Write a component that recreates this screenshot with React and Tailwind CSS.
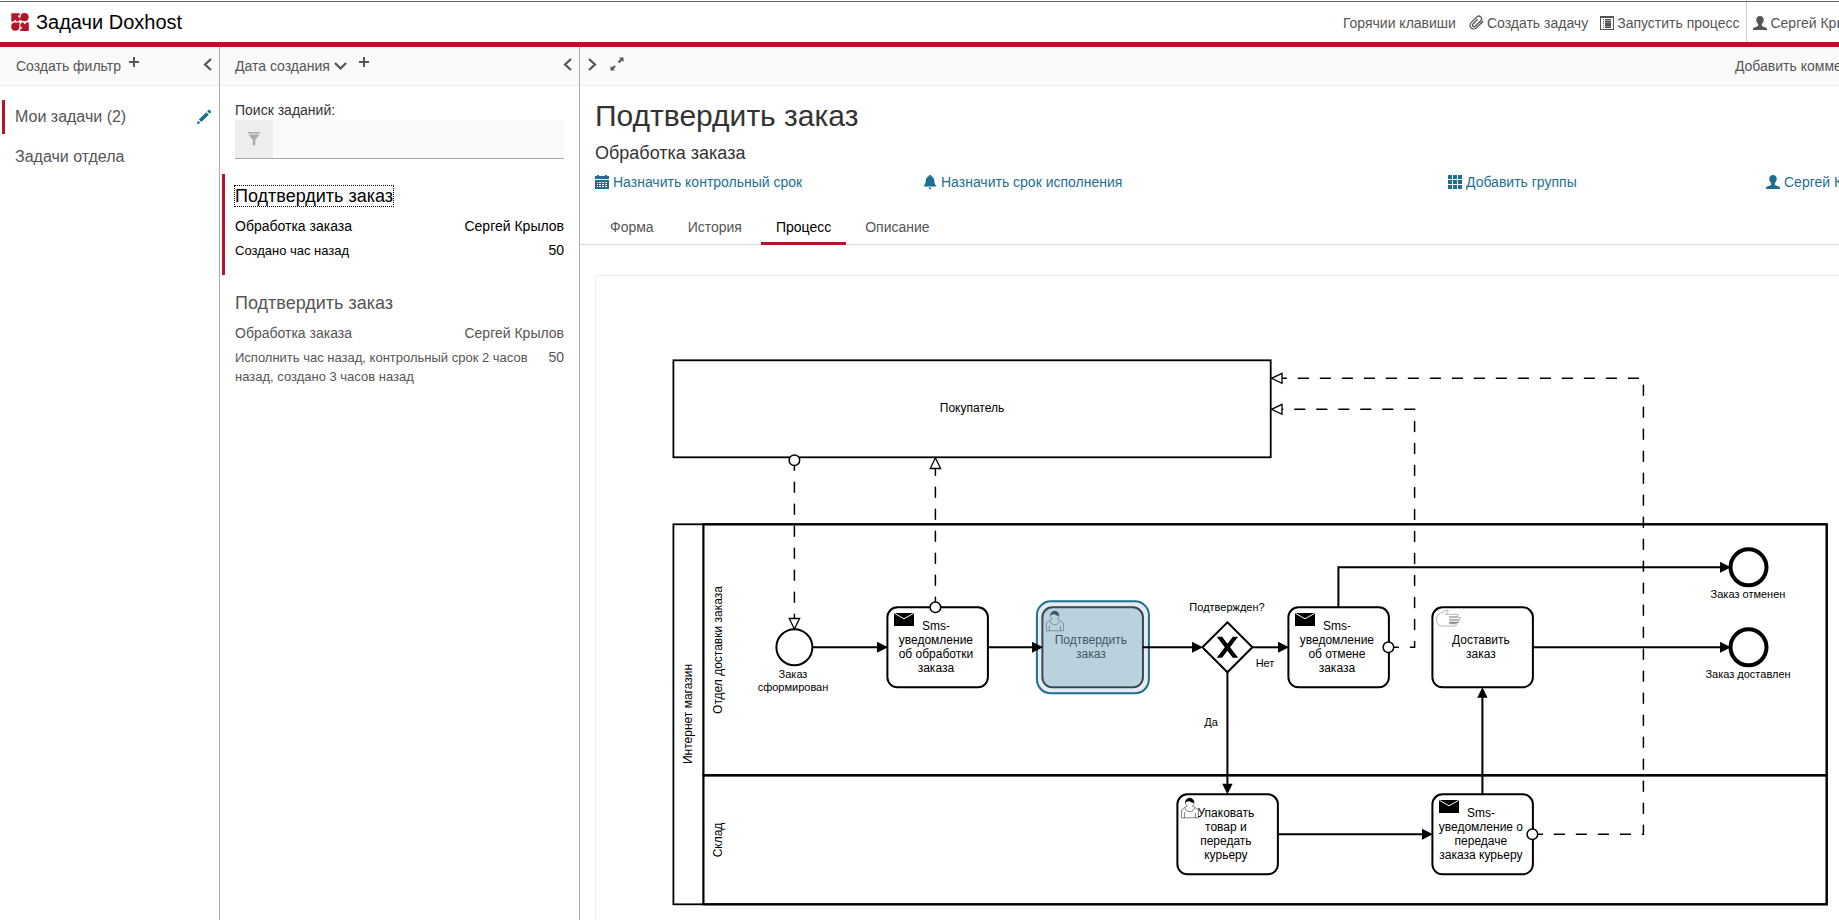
import React from "react";

/* ---------- Icons (16 x 16 grid) ---------- */

function Icon({ children, className = "" }) {
  return (
    <svg viewBox="0 0 16 16" fill="currentColor" aria-hidden="true" className={`h-4 w-4 shrink-0 ${className}`}>
      {children}
    </svg>
  );
}

const PlusIcon = () => (
  <svg viewBox="0 0 10 10" aria-hidden="true" className="mb-2 h-[10px] w-[10px] shrink-0">
    <path d="M4 0h2v4h4v2H6v4H4V6H0V4h4z" fill="currentColor" />
  </svg>
);

const ChevronLeft = () => (
  <svg viewBox="0 0 9 13" aria-hidden="true" className="h-[13px] w-[9px]">
    <path d="M8 1 2 6.500 8 12" fill="none" stroke="currentColor" strokeWidth="2.200" />
  </svg>
);

const ChevronRight = () => (
  <svg viewBox="0 0 9 13" aria-hidden="true" className="h-[13px] w-[9px]">
    <path d="M1 1 7 6.500 1 12" fill="none" stroke="currentColor" strokeWidth="2.200" />
  </svg>
);

const ChevronDown = () => (
  <svg viewBox="0 0 13 8" aria-hidden="true" className="h-2 w-[13px]">
    <path d="M1 1 6.500 6.500 12 1" fill="none" stroke="currentColor" strokeWidth="2.200" />
  </svg>
);

const PencilIcon = () => (
  <Icon className="text-[#1d6f92]">
    <path d="M.8 15.200 2 11.500l2.500 2.500zM2.900 10.600 10.300 3.200l2.500 2.500-7.400 7.400zM11.200 2.300l1.200-1.200c.4-.4.900-.4 1.300 0l1.200 1.200c.4.4.4.9 0 1.300L13.700 4.800z" />
  </Icon>
);

const FilterIcon = () => (
  <svg viewBox="0 0 12 14" aria-hidden="true" className="h-[14px] w-3">
    <path d="M0 0h12v1.500H0zM0.500 2.500h11L7.300 7.800V13L4.800 13.800V7.800z" fill="currentColor" />
  </svg>
);

const ExpandIcon = () => (
  <svg viewBox="0 0 14 14" aria-hidden="true" className="h-[14px] w-[14px]">
    <path
      d="M13.500 .5v4.500L12 3.500 9.300 6.200 7.800 4.700 10.500 2 9 .5zM.5 13.500V9L2 10.500l2.200-2.200 1.500 1.500L3.500 12 5 13.500z"
      fill="currentColor"
    />
  </svg>
);

const PaperclipIcon = () => (
  <svg viewBox="0 0 16 16" aria-hidden="true" className="h-4 w-4 shrink-0">
    <g transform="rotate(45 8 8)" fill="none" stroke="currentColor" strokeWidth="1.300">
      <path d="M11.700 3.500v7.700a3.700 3.700 0 0 1-7.400 0V3a2.700 2.700 0 0 1 5.400 0v7.800a1.600 1.600 0 0 1-3.200 0V4.200" />
      <path d="M11.700 5V1.500" />
    </g>
  </svg>
);

const ListAltIcon = () => (
  <svg viewBox="0 0 14 14" aria-hidden="true" className="h-[14px] w-[14px] shrink-0">
    <path
      d="M0 0h14v14H0zM1 2v11h12V2zM3 3h1v1H3zM5 3h6v1H5zM3 5h1v1H3zM5 5h6v1H5zM3 7h1v1H3zM5 7h6v1H5zM3 9h1v1H3zM5 9h6v1H5zM3 11h1v1H3zM5 11h6v1H5z"
      fill="currentColor"
      fillRule="evenodd"
    />
    <path d="M5 3h6v1.400H5zM5 5.400h6v1.300H5zM5 7.800h6v1.300H5zM5 10.200h6v1.400H5z" fill="currentColor" />
  </svg>
);

const UserIcon = () => (
  <svg viewBox="0 0 14 14" aria-hidden="true" className="h-[14px] w-[14px] shrink-0">
    <path
      d="M7 0c2.300 0 3.700 1.500 3.700 3.700 0 1.900-.7 3.500-1.900 4.300v1.300c0 .6.400.9 1 1.200l3 1.100c.8.400 1.200.8 1.200 1.400v1H0v-1c0-.6.400-1 1.200-1.400l3-1.100c.6-.3 1-.6 1-1.200V8C4 7.200 3.300 5.600 3.300 3.700 3.300 1.500 4.700 0 7 0z"
      fill="currentColor"
    />
  </svg>
);

const CalendarIcon = () => (
  <svg viewBox="0 0 14 14" aria-hidden="true" className="h-[14px] w-[14px] shrink-0">
    <path d="M0 1h2V0h2v1h6V0h2v1h2v3H0z" fill="currentColor" />
    <path
      d="M0 5h14v9H0zM2 7v1h1v-1zm2 0v1h2v-1zm3 0v1h2v-1zm3 0v1h2v-1zM2 9v1h1V9zm2 0v1h2V9zm3 0v1h2V9zm3 0v1h2V9zM2 11v1h1v-1zm2 0v1h2v-1zm3 0v1h2v-1zm3 0v1h2v-1z"
      fill="currentColor"
      fillRule="evenodd"
    />
  </svg>
);

const BellIcon = () => (
  <svg viewBox="0 0 14 14" aria-hidden="true" className="h-[14px] w-[14px] shrink-0">
    <path
      d="M7 0c.7 0 1.200.5 1.200 1.200C10 1.800 11 3.300 11.200 5.300c.2 2.500.5 3.700 1.300 4.600.6.600.9 1 .9 1.600H.6c0-.6.3-1 .9-1.600.8-.9 1.100-2.100 1.300-4.600C3 3.300 4 1.800 5.800 1.200 5.800.5 6.300 0 7 0zM5.500 12.500h3c0 .9-.6 1.500-1.500 1.500s-1.500-.6-1.500-1.500z"
      fill="currentColor"
    />
  </svg>
);

const GridIcon = () => (
  <svg viewBox="0 0 14 14" aria-hidden="true" className="h-[14px] w-[14px] shrink-0">
    <path
      d="M0 0h4v4H0zM5 0h4v4H5zM10 0h4v4h-4zM0 5h4v4H0zM5 5h4v4H5zM10 5h4v4h-4zM0 10h4v4H0zM5 10h4v4H5zM10 10h4v4h-4z"
      fill="currentColor"
    />
  </svg>
);

const Logo = () => (
  <svg viewBox="0 0 18 18" aria-hidden="true" className="h-[18px] w-[18px] shrink-0">
    <g fill="#b5152b">
      <path d="M.3.200h8.500v2.200c-.9-.4-1.700.1-1.700.9s.8 1.300 1.700.9v2.100L7.500 8.500H5.200c.4-.9-.1-1.600-.9-1.600s-1.300.7-.9 1.600H.3z" />
      <circle cx="13.500" cy="4.200" r="4.100" />
      <circle cx="9.900" cy="6.200" r="1.300" />
      <circle cx="4.300" cy="13.700" r="4.100" />
      <circle cx="7.400" cy="10.500" r="1.300" />
      <path d="M17.800 17.900H9.300v-2.200c.9.400 1.700-.1 1.700-.9s-.8-1.300-1.700-.9v-2.100l1.300-2.200h2.300c-.4.900.1 1.600.9 1.600s1.300-.7.900-1.600h3.100z" />
    </g>
  </svg>
);

/* ---------- Process diagram ---------- */

const ARROW = {
  right: (x, y) => `M${x} ${y}l-11-5.500v11z`,
  left: (x, y) => `M${x} ${y}l10.500-5v10z`,
  up: (x, y) => `M${x} ${y}l-5.200 10.500h10.400z`,
  down: (x, y) => `M${x} ${y}l-5.200-10.500h10.400z`,
};

const sequenceFlows = [
  { d: "M812.300 647.300H880", dir: "right", x: 888, y: 647.3 },
  { d: "M988 647.300H1035", dir: "right", x: 1043, y: 647.3 },
  { d: "M1142.500 647.300H1195", dir: "right", x: 1203, y: 647.3 },
  { d: "M1252.500 647.300H1281", dir: "right", x: 1289, y: 647.3 },
  { d: "M1338.400 607.300V567.300H1723", dir: "right", x: 1731, y: 567.3 },
  { d: "M1532.400 647.300H1723", dir: "right", x: 1731, y: 647.3 },
  { d: "M1227.400 672V786", dir: "down", x: 1227.4, y: 794.3 },
  { d: "M1277.500 834.300H1425", dir: "right", x: 1433, y: 834.3 },
  { d: "M1482.400 794.300V695", dir: "up", x: 1482.4, y: 687.3 },
];

const messageFlows = [
  { d: "M794.400 460.300V622", cx: 794.4, cy: 460.3, dir: "down", x: 794.4, y: 629 },
  { d: "M935.400 607.300V465", cx: 935.4, cy: 607.3, dir: "up", x: 935.4, y: 458 },
  { d: "M1388.400 647.300H1414.600V409.300H1280", cx: 1388.4, cy: 647.3, dir: "left", x: 1271.5, y: 409.3 },
  { d: "M1532.400 834.300H1643.400V378.300H1280", cx: 1532.4, cy: 834.3, dir: "left", x: 1271.5, y: 378.3 },
];

const tasks = [
  { x: 887.4, y: 607.3, icon: "mail", top: 630, lines: ["Sms-", "уведомление", "об обработки", "заказа"] },
  { x: 1042.4, y: 607.3, icon: "user", top: 644, lines: ["Подтвердить", "заказ"], selected: true },
  { x: 1288.4, y: 607.3, icon: "mail", top: 630, lines: ["Sms-", "уведомление", "об отмене", "заказа"] },
  { x: 1432.4, y: 607.3, icon: "hand", top: 644, lines: ["Доставить", "заказ"] },
  { x: 1177.4, y: 794.3, icon: "user", top: 817, lines: ["Упаковать", "товар и", "передать", "курьеру"] },
  { x: 1432.4, y: 794.3, icon: "mail", top: 817, lines: ["Sms-", "уведомление о", "передаче", "заказа курьеру"] },
];

const outerLabels = [
  { x: 793, y: 678, text: "Заказ" },
  { x: 793, y: 691, text: "сформирован" },
  { x: 1227, y: 611, text: "Подтвержден?" },
  { x: 1265, y: 667, text: "Нет" },
  { x: 1211, y: 726, text: "Да" },
  { x: 1748, y: 598, text: "Заказ отменен" },
  { x: 1748, y: 678, text: "Заказ доставлен" },
];

const laneLabels = [
  { x: 692, y: 714, text: "Интернет магазин" },
  { x: 722, y: 650, text: "Отдел доставки заказа" },
  { x: 722, y: 840, text: "Склад" },
];

function TaskMarker({ type }) {
  if (type === "mail") {
    return (
      <g>
        <rect x="6.600" y="5.700" width="20" height="13" fill="#000" />
        <path d="M7 6 16.600 11.500 26.300 6" fill="none" stroke="#fff" strokeWidth="1" />
      </g>
    );
  }
  if (type === "user") {
    return (
      <g stroke="#000" strokeWidth="0.5" fill="#fff">
        <path d="m15 12c.909-.845 1.594-2.049 1.594-3.385 0-2.554-1.805-4.622-4.357-4.622s-4.288 2.068-4.288 4.622c0 1.348.974 2.562 1.896 3.405-.529.187-5.669 2.097-5.794 4.756v6.718h17v-6.718c0-2.298-5.528-4.595-6.051-4.775zm-8 6v5.500m11 0v-5" />
        <path d="m15 12m2.162 1.009c0 2.447-2.158 4.431-4.821 4.431-2.666 0-4.822-1.981-4.822-4.431" />
        <path
          d="m15 12m-6.900-3.800s2.251-2.358 4.274-1.177c2.024 1.181 4.221 1.537 4.124.965-.098-.57-.117-3.791-4.191-4.136-3.575.001-4.208 3.670-4.208 4.348z"
          fill="#000"
        />
      </g>
    );
  }
  return (
    <path
      d="m17 15c.234-.01 5.604.008 8.029.004.808 0 1.271-.172 1.417-.752.227-.898-.334-1.314-1.338-1.316-2.467-.01-7.886-.004-8.108-.004-.014-.079.016-.533 0-.61.195-.042 8.507.006 9.616.002.877-.007 1.350-.438 1.353-1.208.003-.768-.479-1.090-1.350-1.091-2.968-.002-9.619-.013-9.619-.013v-.591s5.052-.016 7.225-.016c.888-.002 1.354-.416 1.351-1.193-.006-.761-.492-1.196-1.361-1.196-3.473-.005-10.860-.003-11.083-.003-.022-.047-.045-.094-.069-.139.394-.319 2.041-1.626 2.415-2.017.447-.487.519-1.088.1-1.539-.46-.496-1.274-.5-1.924-.1C11.500 4.200 9 5.400 6.800 6.700 4.800 8 4.100 9.800 4.100 12c0 2.300.7 4.300 2.200 5.600 1.200 1 2.600 1.200 4 1.200h12.200c.9 0 1.500-.4 1.500-1.100 0-.8-.6-1.200-1.500-1.200H17v-.6h7.500c.9 0 1.400-.3 1.400-.9H17z"
      fill="#fff"
      stroke="#000"
      strokeWidth="0.5"
      strokeOpacity="0.6"
    />
  );
}

function Task({ x, y, icon, top, lines, selected }) {
  return (
    <g>
      <g transform={`translate(${x} ${y})`}>
        <rect width="100.500" height="80" rx="10" fill="#fff" stroke="#000" strokeWidth="2" />
        <TaskMarker type={icon} />
      </g>
      {lines.map((line, i) => (
        <text key={line} x={x + 48.5} y={top + i * 14} fontSize="12" textAnchor="middle">
          {line}
        </text>
      ))}
      {selected && (
        <g>
          <rect x={x} y={y} width="100" height="80" rx="10" fill="#1d6f92" fillOpacity="0.27" />
          <rect x={x - 5.5} y={y - 6} width="112" height="92" rx="14" fill="#abc4d6" fillOpacity="0.32" />
          <rect
            x={x - 5.5}
            y={y - 6}
            width="112"
            height="92"
            rx="14"
            fill="none"
            stroke="#1d6f92"
            strokeWidth="2"
          />
        </g>
      )}
    </g>
  );
}

function ProcessDiagram() {
  return (
    <svg
      viewBox="596 276 1310 680"
      width="1310"
      height="680"
      role="img"
      aria-label="Обработка заказа"
      className="block font-['Liberation_Sans',Arial,sans-serif]"
    >
      <g fill="none" stroke="#000" strokeWidth="1.800">
        <rect x="673.4" y="360.3" width="597.300" height="97" />
        <rect x="673.4" y="524.3" width="1153.300" height="380" />
        <rect x="703.4" y="524.3" width="1123.300" height="251" strokeWidth="2.200" />
        <rect x="703.4" y="775.3" width="1123.300" height="129" strokeWidth="2.200" />
      </g>
      <text x="972" y="412" fontSize="12" textAnchor="middle">
        Покупатель
      </text>
      {laneLabels.map((l) => (
        <text key={l.text} transform={`translate(${l.x} ${l.y}) rotate(-90)`} fontSize="12" textAnchor="middle">
          {l.text}
        </text>
      ))}

      <circle cx="794.4" cy="647.3" r="18" fill="#fff" stroke="#000" strokeWidth="2" />
      <circle cx="1748.500" cy="567.300" r="18" fill="#fff" stroke="#000" strokeWidth="4" />
      <circle cx="1748.500" cy="647.300" r="18" fill="#fff" stroke="#000" strokeWidth="4" />

      {tasks.map((t) => (
        <Task key={`${t.x}-${t.y}`} {...t} />
      ))}

      <path d="M1227.400 622.300l25 25-25 25-25-25z" fill="#fff" stroke="#000" strokeWidth="2" />
      <path
        d="M1218.300 637.600l7.430 9.710-7.430 9.710h3.430l5.710-7.460 5.710 7.460h3.430l-7.430-9.710 7.430-9.710h-3.430l-5.710 7.460-5.710-7.460z"
        stroke="#000"
        strokeWidth="1.500"
      />

      {sequenceFlows.map((f) => (
        <g key={f.d}>
          <path d={f.d} fill="none" stroke="#000" strokeWidth="2" />
          <path d={ARROW[f.dir](f.x, f.y)} />
        </g>
      ))}
      {messageFlows.map((f) => (
        <g key={f.d} stroke="#000">
          <path d={f.d} fill="none" strokeWidth="1.500" strokeLinecap="round" strokeDasharray="10 12" />
          <circle cx={f.cx} cy={f.cy} r="5.300" fill="#fff" strokeWidth="1.500" />
          <path d={ARROW[f.dir](f.x, f.y)} fill="#fff" strokeWidth="1.300" />
        </g>
      ))}

      {outerLabels.map((l) => (
        <text key={l.text} x={l.x} y={l.y} fontSize="11" textAnchor="middle">
          {l.text}
        </text>
      ))}
    </svg>
  );
}

/* ---------- Page parts ---------- */

function TopBar() {
  const link = "flex items-center gap-[3px] whitespace-nowrap";
  return (
    <header className="mt-px flex h-[46px] shrink-0 items-stretch justify-between border-t border-b-[5px] border-t-[#666] border-b-[#b5152b] pr-[50px] pl-[11px]">
      <a href="#home" className="flex items-center gap-[7px] text-xl text-black">
        <Logo />
        Задачи Doxhost
      </a>
      <nav className="flex items-stretch">
        <div className="flex items-stretch gap-3 pt-[2px] pr-[7px]">
          <a href="#hotkeys" className={link}>Горячии клавиши</a>
          <a href="#create-task" className={link}>
            <PaperclipIcon />
            Создать задачу
          </a>
          <a href="#start-process" className={link}>
            <ListAltIcon />
            Запустить процесс
          </a>
        </div>
        <a href="#account" className={`${link} border-l border-[#ccc] pt-[2px] pl-[6px]`}>
          <UserIcon />
          Сергей Крылов
        </a>
      </nav>
    </header>
  );
}

function PanelBar({ children }) {
  return (
    <div className="flex h-[39px] shrink-0 items-center border-b border-[#eee] bg-[#fafafa]">{children}</div>
  );
}

function FilterPanel() {
  return (
    <aside className="flex w-[220px] shrink-0 flex-col border-r border-[#aaa]">
      <PanelBar>
        <button type="button" className="flex items-center gap-2 pl-4">
          Создать фильтр
          <PlusIcon />
        </button>
        <button type="button" aria-label="Свернуть фильтры" className="mr-[7px] mb-1 ml-auto">
          <ChevronLeft />
        </button>
      </PanelBar>
      <ul className="flex flex-col gap-[6px] pt-[14px] pl-[2px] text-base leading-[34px]">
        <li className="flex items-center justify-between border-l-[3px] border-[#b5152b] pr-[7px] pl-[10px]">
          <a href="#my-tasks">Мои задачи (2)</a>
          <button type="button" aria-label="Изменить фильтр">
            <PencilIcon />
          </button>
        </li>
        <li className="border-l-[3px] border-transparent pl-[10px]">
          <a href="#department-tasks">Задачи отдела</a>
        </li>
      </ul>
    </aside>
  );
}

function TaskItem({ active, dates }) {
  return (
    <li
      className={
        active
          ? "border-l-[3px] border-[#b5152b] pt-3 pr-[15px] pb-[15px] pl-[10px] text-black"
          : "border-l-[3px] border-transparent pt-3 pr-[15px] pb-[15px] pl-[10px]"
      }
    >
      <a
        href="#task"
        className={
          active
            ? "inline-block align-top text-lg leading-5 outline-1 outline-black outline-dotted"
            : "inline-block align-top text-lg leading-5"
        }
      >
        Подтвердить заказ
      </a>
      <div className="mt-[10px] flex justify-between">
        <span>Обработка заказа</span>
        <span>Сергей Крылов</span>
      </div>
      <div className="mt-[5px] flex justify-between gap-3 leading-[19px]">
        <span className="text-[13px]">{dates}</span>
        <span>50</span>
      </div>
    </li>
  );
}

function TaskListPanel() {
  return (
    <section className="flex w-[360px] shrink-0 flex-col border-r border-[#aaa]">
      <PanelBar>
        <button type="button" className="flex items-center gap-1 pl-[15px]">
          Дата создания
          <ChevronDown />
        </button>
        <button type="button" aria-label="Добавить сортировку" className="ml-3">
          <PlusIcon />
        </button>
        <button type="button" aria-label="Свернуть список" className="mr-[7px] mb-1 ml-auto">
          <ChevronLeft />
        </button>
      </PanelBar>
      <div className="px-[15px] pt-[14px]">
        <label htmlFor="task-search" className="block text-[#333]">
          Поиск заданий:
        </label>
        <div className="flex h-[39px] border-b border-[#aaa] bg-[#fafafa]">
          <span className="flex w-[38px] shrink-0 items-center justify-center bg-[#eee] text-[#aaa]">
            <FilterIcon />
          </span>
          <input id="task-search" type="text" className="min-w-0 flex-1 bg-transparent px-3 outline-none" />
        </div>
      </div>
      <ul className="flex flex-col gap-[6px] pt-[15px] pl-[2px]">
        <TaskItem active dates="Создано час назад" />
        <TaskItem dates="Исполнить час назад, контрольный срок 2 часов назад, создано 3 часов назад" />
      </ul>
    </section>
  );
}

const tabs = ["Форма", "История", "Процесс", "Описание"];

function TaskDetails() {
  const action = "flex items-center gap-1 whitespace-nowrap";
  return (
    <main className="flex min-w-0 flex-1 flex-col">
      <PanelBar>
        <button type="button" aria-label="Развернуть список" className="mb-1 ml-[8px]">
          <ChevronRight />
        </button>
        <button type="button" aria-label="На весь экран" className="mb-1 ml-[13px]">
          <ExpandIcon />
        </button>
        <button type="button" className="mr-[15px] ml-auto flex items-center gap-2">
          Добавить комментарий
          <PlusIcon />
        </button>
      </PanelBar>

      <div className="px-[15px] pt-3 text-[#333]">
        <h1 className="text-3xl leading-9">Подтвердить заказ</h1>
        <h2 className="mt-[9px] text-lg leading-5">Обработка заказа</h2>
        <div className="mt-[9px] grid grid-cols-[328fr_525fr_318fr_139fr] text-[#1d6f92]">
          <button type="button" className={action}>
            <CalendarIcon />
            Назначить контрольный срок
          </button>
          <button type="button" className={action}>
            <BellIcon />
            Назначить срок исполнения
          </button>
          <button type="button" className={action}>
            <GridIcon />
            Добавить группы
          </button>
          <button type="button" className={action}>
            <UserIcon />
            Сергей Крылов
          </button>
        </div>
      </div>

      <div role="tablist" className="mt-[17px] flex gap-1 border-b border-[#ddd] pl-[15px]">
        {tabs.map((name) => (
          <button
            key={name}
            type="button"
            role="tab"
            aria-selected={name === "Процесс"}
            className={
              name === "Процесс"
                ? "-mb-px border-b-[3px] border-[#b5152b] px-[15px] pt-2 pb-[5px] text-black"
                : "-mb-px border-b-[3px] border-transparent px-[15px] pt-2 pb-[5px]"
            }
          >
            {name}
          </button>
        ))}
      </div>

      <div className="mx-[15px] mt-[30px] flex-1 overflow-hidden border border-b-0 border-[#eee]">
        <ProcessDiagram />
      </div>
    </main>
  );
}

export default function App() {
  return (
    <div className="h-screen overflow-hidden bg-white font-['Liberation_Sans',Arial,sans-serif] text-sm text-[#555]">
      <div className="flex h-full w-[calc(100%+81px)] flex-col">
        <TopBar />
        <div className="flex min-h-0 flex-1">
          <FilterPanel />
          <TaskListPanel />
          <TaskDetails />
        </div>
      </div>
    </div>
  );
}
